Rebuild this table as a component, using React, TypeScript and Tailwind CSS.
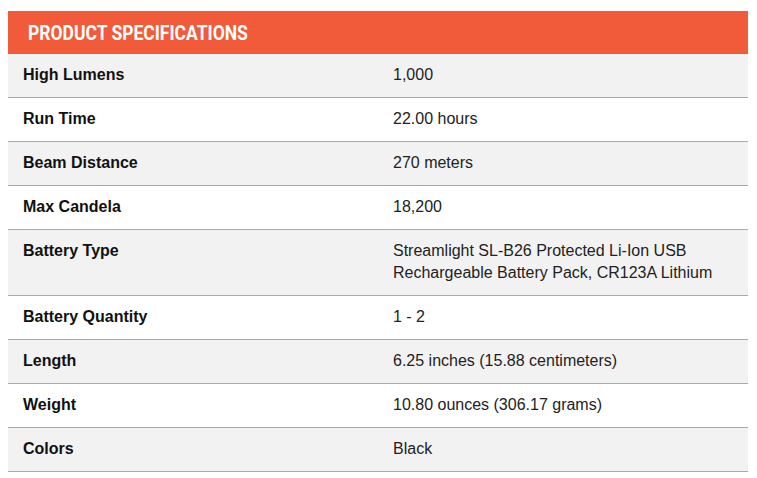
const specs: [string, string][] = [
  ["High Lumens", "1,000"],
  ["Run Time", "22.00 hours"],
  ["Beam Distance", "270 meters"],
  ["Max Candela", "18,200"],
  ["Battery Type", "Streamlight SL-B26 Protected Li-Ion USB Rechargeable Battery Pack, CR123A Lithium"],
  ["Battery Quantity", "1 - 2"],
  ["Length", "6.25 inches (15.88 centimeters)"],
  ["Weight", "10.80 ounces (306.17 grams)"],
  ["Colors", "Black"],
]

export default function App() {
  return (
    <div className="bg-white px-[8px] pt-[11px] min-h-[478px]">
      <div className="w-[740px]">
        {/* Header */}
        <div className="h-[43px] bg-[#f15b3a] flex items-center pl-[20px] overflow-hidden">
          <span
            className="inline-block origin-left scale-x-[0.875] text-white font-bold text-[20px] whitespace-nowrap"
            style={{ fontFamily: "Roboto, sans-serif" }}
          >
            PRODUCT SPECIFICATIONS
          </span>
        </div>

        {/* Rows */}
        <div style={{ fontFamily: '"Liberation Sans", Arial, sans-serif' }}>
          {specs.map(([label, value], i) => (
            <div
              key={label}
              className={`grid grid-cols-2 border-b border-[#a9a9a9] ${i % 2 === 0 ? "bg-[#f2f2f2]" : "bg-white"}`}
            >
              <div className="pl-[15px] pr-[15px] pt-[10px] pb-[11px] text-[16px] leading-[22px] font-bold text-[#111]">
                {label}
              </div>
              <div className="pl-[15px] pr-[20px] pt-[10px] pb-[11px] text-[16px] leading-[22px] text-[#222]">
                {value}
              </div>
            </div>
          ))}
        </div>
      </div>
    </div>
  )
}
